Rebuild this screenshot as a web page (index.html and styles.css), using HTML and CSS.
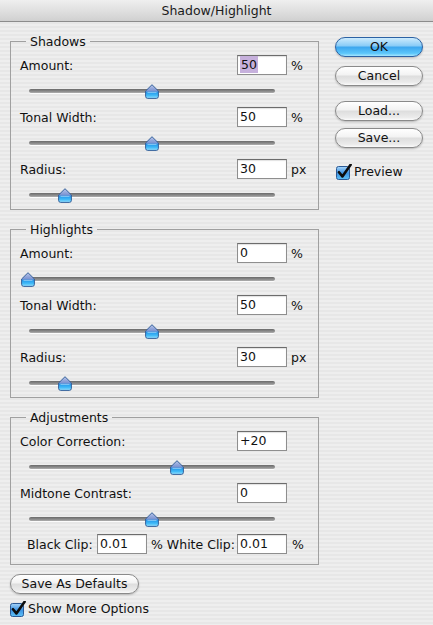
FILE: index.html
```html
<!DOCTYPE html>
<html>
<head>
<meta charset="utf-8">
<title>Shadow/Highlight</title>
<link rel="stylesheet" href="styles.css">
</head>
<body>
<svg class="defs" width="0" height="0" aria-hidden="true">
  <defs>
    <linearGradient id="thumbFill" x1="0" y1="0" x2="0" y2="1">
      <stop offset="0" stop-color="#b9c6ea"/>
      <stop offset="0.48" stop-color="#7790d0"/>
      <stop offset="0.53" stop-color="#1f95ea"/>
      <stop offset="0.8" stop-color="#45bdf8"/>
      <stop offset="1" stop-color="#9fe3ff"/>
    </linearGradient>
    <linearGradient id="boxFill" x1="0" y1="0" x2="0" y2="1">
      <stop offset="0" stop-color="#a9d6fa"/>
      <stop offset="0.5" stop-color="#3d93e3"/>
      <stop offset="1" stop-color="#5fc2f7"/>
    </linearGradient>
    <symbol id="thumb" viewBox="0 0 14 15">
      <path d="M7 0.7 L13.4 7 V12.3 Q13.4 14.4 11.3 14.4 H2.7 Q0.6 14.4 0.6 12.3 V7 Z" fill="url(#thumbFill)" stroke="#35609a" stroke-width="1"/>
      <path d="M2.5 8.4 H11.5" stroke="#ffffff" stroke-opacity="0.45" stroke-width="1"/>
    </symbol>
    <symbol id="check" viewBox="0 0 16 16">
      <rect x="0.5" y="2.5" width="13" height="13" rx="2" fill="url(#boxFill)" stroke="#2b5a96"/>
      <path d="M3 8.2 L6.4 12.4 L14.6 0.8" fill="none" stroke="#0d0d0d" stroke-width="2.6" stroke-linecap="round" stroke-linejoin="round"/>
    </symbol>
  </defs>
</svg>

<div class="titlebar">Shadow/Highlight</div>

<div class="main">
  <div class="left">
    <fieldset class="group">
      <legend>Shadows</legend>
      <div class="control">
        <div class="field-row"><span class="label">Amount:</span><span class="input"><span class="sel">50</span></span><span class="unit">%</span></div>
        <div class="slider"><div class="track"></div><div class="rail"><svg class="thumb" style="left:50%"><use href="#thumb"/></svg></div></div>
      </div>
      <div class="control">
        <div class="field-row"><span class="label">Tonal Width:</span><span class="input">50</span><span class="unit">%</span></div>
        <div class="slider"><div class="track"></div><div class="rail"><svg class="thumb" style="left:50%"><use href="#thumb"/></svg></div></div>
      </div>
      <div class="control">
        <div class="field-row"><span class="label">Radius:</span><span class="input">30</span><span class="unit">px</span></div>
        <div class="slider"><div class="track"></div><div class="rail"><svg class="thumb" style="left:15%"><use href="#thumb"/></svg></div></div>
      </div>
    </fieldset>

    <fieldset class="group">
      <legend>Highlights</legend>
      <div class="control">
        <div class="field-row"><span class="label">Amount:</span><span class="input">0</span><span class="unit">%</span></div>
        <div class="slider"><div class="track"></div><div class="rail"><svg class="thumb" style="left:0%"><use href="#thumb"/></svg></div></div>
      </div>
      <div class="control">
        <div class="field-row"><span class="label">Tonal Width:</span><span class="input">50</span><span class="unit">%</span></div>
        <div class="slider"><div class="track"></div><div class="rail"><svg class="thumb" style="left:50%"><use href="#thumb"/></svg></div></div>
      </div>
      <div class="control">
        <div class="field-row"><span class="label">Radius:</span><span class="input">30</span><span class="unit">px</span></div>
        <div class="slider"><div class="track"></div><div class="rail"><svg class="thumb" style="left:15%"><use href="#thumb"/></svg></div></div>
      </div>
    </fieldset>

    <fieldset class="group group-adj">
      <legend>Adjustments</legend>
      <div class="control">
        <div class="field-row"><span class="label">Color Correction:</span><span class="input">+20</span></div>
        <div class="slider"><div class="track"></div><div class="rail"><svg class="thumb" style="left:60%"><use href="#thumb"/></svg></div></div>
      </div>
      <div class="control">
        <div class="field-row"><span class="label">Midtone Contrast:</span><span class="input">0</span></div>
        <div class="slider"><div class="track"></div><div class="rail"><svg class="thumb" style="left:50%"><use href="#thumb"/></svg></div></div>
      </div>
      <div class="clip-row">
        <span class="clip-label">Black Clip:</span><span class="input">0.01</span><span class="clip-label2">% White Clip:</span><span class="input">0.01</span><span class="unit unit-clip">%</span>
      </div>
    </fieldset>

    <div class="btn btn-defaults">Save As Defaults</div>
    <div class="check-row check-more"><svg class="check"><use href="#check"/></svg><span>Show More Options</span></div>
  </div>

  <div class="right">
    <div class="btn btn-ok">OK</div>
    <div class="btn btn-cancel">Cancel</div>
    <div class="btn btn-load">Load...</div>
    <div class="btn btn-save">Save...</div>
    <div class="check-row check-preview"><svg class="check"><use href="#check"/></svg><span>Preview</span></div>
  </div>
</div>
</body>
</html>
```

FILE: styles.css
```css
* { box-sizing: border-box; }
html, body { margin: 0; padding: 0; }
body {
  width: 433px;
  height: 625px;
  overflow: hidden;
  font-family: "DejaVu Sans", "Liberation Sans", sans-serif;
  font-size: 12.5px;
  color: #111;
  background: repeating-linear-gradient(180deg, #eeeeee 0 2px, #e7e7e7 2px 4px);
}
.defs { position: absolute; width: 0; height: 0; overflow: hidden; }

.titlebar {
  height: 22px;
  line-height: 21px;
  text-align: center;
  font-size: 12.5px;
  color: #1a1a1a;
  background: linear-gradient(180deg, #efefef 0%, #e0e0e0 50%, #d0d0d0 100%);
  border-bottom: 1px solid #8c8c8c;
}

.main { display: flex; }
.left { margin-left: 10px; width: 309px; display: flex; flex-direction: column; }
.right { margin-left: 16px; width: 88px; padding-top: 15px; display: flex; flex-direction: column; }

.group {
  margin: 12px 0 0 0;
  padding: 6px 0 0 9px;
  border: 1px solid #a0a0a0;
  min-width: 0;
}
.group legend {
  margin-left: 6px;
  padding: 0 4px;
  line-height: 15px;
}
.group-adj { padding-bottom: 10px; }

.control + .control { margin-top: 2px; }

.field-row { display: flex; align-items: center; height: 20px; }
.label { width: 217px; flex: none; }
.input {
  flex: none;
  width: 50px;
  height: 20px;
  line-height: 18px;
  padding-left: 2px;
  background: #fff;
  border: 1px solid #8e8e8e;
  border-top-color: #6c6c6c;
  box-shadow: inset 0 1px 1px rgba(0, 0, 0, 0.12);
  color: #111;
}
.sel { background: #c6b0dc; padding: 1px 1px 1px 1px; }
.unit { margin-left: 4px; }

.slider { position: relative; height: 30px; padding-top: 14px; }
.track {
  margin-left: 9px;
  width: 246px;
  height: 4px;
  border-radius: 2px;
  background: linear-gradient(180deg, #6a6a6a, #8e8e8e 60%, #b0b0b0);
  box-shadow: 0 1px 0 rgba(255, 255, 255, 0.8);
}
.rail { position: absolute; left: 8px; top: 9px; width: 248px; height: 15px; }
.thumb { position: absolute; top: 0; width: 14px; height: 15px; margin-left: -7px; }

.clip-row { display: flex; align-items: center; height: 20px; margin-top: 1px; padding-left: 7px; }
.clip-label { width: 70px; flex: none; }
.clip-label2 { width: 86px; flex: none; margin-left: 4px; }
.unit-clip { margin-left: 5px; }

.btn {
  height: 20px;
  line-height: 18px;
  text-align: center;
  border-radius: 10px;
  border: 1px solid #8a8a8a;
  background: linear-gradient(180deg, #ffffff 0%, #f3f3f3 42%, #dedede 52%, #ebebeb 85%, #fbfbfb 100%);
  box-shadow: 0 1px 2px rgba(0, 0, 0, 0.22);
  color: #111;
}
.btn-ok {
  border-color: #2c62a4;
  background: linear-gradient(180deg, #cdebfd 0%, #8ccdf7 42%, #3ea7ef 52%, #5cc6fa 85%, #a5e6ff 100%);
}
.btn-cancel { margin-top: 9px; }
.btn-load { margin-top: 15px; }
.btn-save { margin-top: 7px; }

.check-row { display: flex; align-items: center; height: 17px; }
.check { width: 16px; height: 16px; flex: none; }
.check-row span { margin-left: 2px; }
.check-preview { margin-top: 15px; margin-left: 1px; }

.btn-defaults { width: 129px; margin-top: 9px; }
.check-more { margin-top: 6px; }
```
